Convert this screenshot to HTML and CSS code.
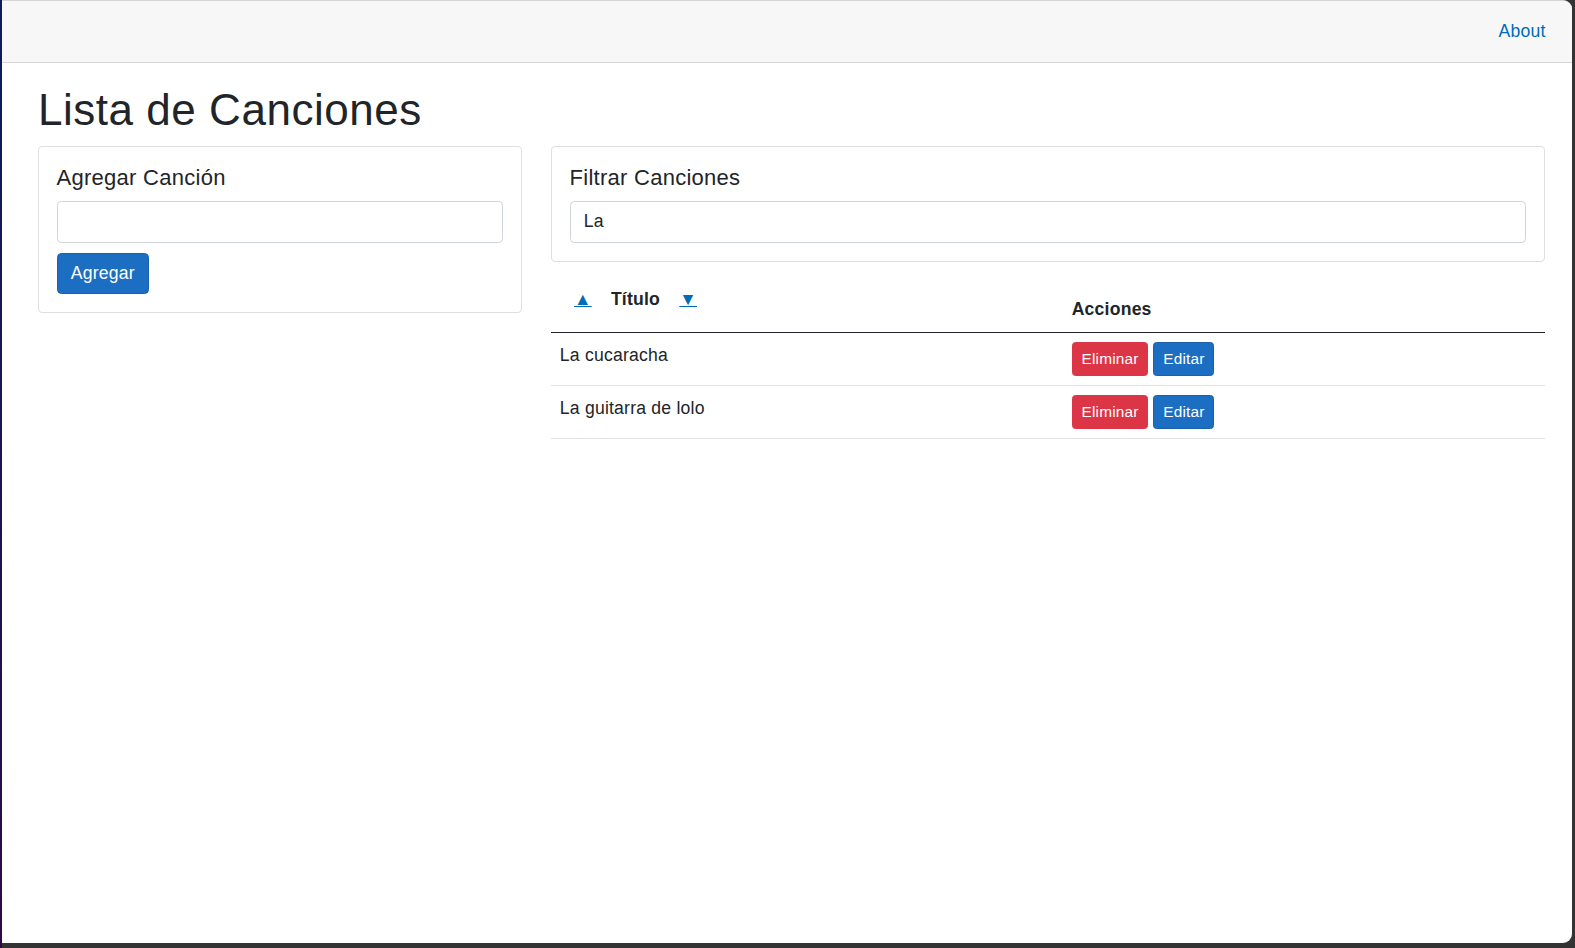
FILE: index.html
```html
<!DOCTYPE html>
<html lang="es">
<head>
<meta charset="utf-8">
<title>Lista de Canciones</title>
<link rel="stylesheet" href="styles.css">
</head>
<body>
<div class="edge"></div>
<div class="window">
  <header class="top-row">
    <a href="#" class="about">About</a>
  </header>
  <main class="content">
    <h1>Lista de Canciones</h1>
    <div class="row">
      <div class="col-left">
        <div class="card">
          <h5 class="card-title">Agregar Canción</h5>
          <input class="form-control mb" type="text" value="">
          <button class="btn btn-primary">Agregar</button>
        </div>
      </div>
      <div class="col-right">
        <div class="card">
          <h5 class="card-title">Filtrar Canciones</h5>
          <input class="form-control" type="text" value="La">
        </div>
        <table class="table">
          <thead>
            <tr>
              <th class="col-title"><button class="btn btn-link sort">▲</button> Título <button class="btn btn-link sort">▼</button></th>
              <th class="col-actions">Acciones</th>
            </tr>
          </thead>
          <tbody>
            <tr>
              <td>La cucaracha</td>
              <td><button class="btn btn-sm btn-danger">Eliminar</button> <button class="btn btn-sm btn-primary">Editar</button></td>
            </tr>
            <tr>
              <td>La guitarra de lolo</td>
              <td><button class="btn btn-sm btn-danger">Eliminar</button> <button class="btn btn-sm btn-primary">Editar</button></td>
            </tr>
          </tbody>
        </table>
      </div>
    </div>
  </main>
</div>
</body>
</html>
```

FILE: styles.css
```css
* {
  box-sizing: border-box;
  letter-spacing: 0.012em;
}

html, body {
  margin: 0;
  height: 948px;
  overflow: hidden;
}

body {
  background: #333333;
  display: flex;
  font-family: "Liberation Sans", Arial, Helvetica, sans-serif;
  font-size: 17.6px;
  line-height: 1.5;
  color: #212529;
}

.edge {
  width: 2px;
  flex: none;
  background: linear-gradient(#0b1d5a, #1a1450 50%, #2c0b40);
}

.window {
  flex: 1;
  margin: 0 3px 5px 0;
  background: #ffffff;
  border-top: 1px solid #d4d4d4;
  border-radius: 0 9px 9px 0;
  overflow: hidden;
  display: flex;
  flex-direction: column;
}

.top-row {
  height: 61.6px;
  flex: none;
  background: #f7f7f7;
  border-bottom: 1px solid #d6d5d5;
  display: flex;
  align-items: center;
  justify-content: flex-end;
  padding: 0 26.4px 0 35.2px;
}

.about {
  color: #006bb7;
  text-decoration: none;
  white-space: nowrap;
}

.content {
  padding: 21.4px 27px 0 36px;
}

h1 {
  margin: 0 0 9.2px;
  font-size: 44px;
  font-weight: 500;
  line-height: 1.2;
}

.row {
  display: grid;
  grid-template-columns: 484px 1fr;
  column-gap: 29px;
  align-items: start;
}

.card {
  border: 1px solid rgba(0, 0, 0, 0.125);
  border-radius: 4.4px;
  padding: 17.6px 17.6px 18.2px;
  background: #fff;
}

.card-title {
  margin: 0 0 10px;
  font-size: 22px;
  font-weight: 500;
  line-height: 1.2;
}

.form-control {
  display: block;
  width: 100%;
  height: 41.6px;
  padding: 6.6px 13.2px;
  font: inherit;
  font-size: 17.6px;
  line-height: 1.5;
  color: #212529;
  background: #fff;
  border: 1px solid #ced4da;
  border-radius: 4.4px;
  outline: none;
}

.mb { margin-bottom: 10px; }

.btn {
  display: inline-block;
  font-family: inherit;
  font-size: 17.6px;
  font-weight: 400;
  line-height: 1.5;
  padding: 6.6px 13.2px;
  border: 1px solid transparent;
  border-radius: 4.4px;
  background: transparent;
  color: #212529;
  vertical-align: baseline;
  cursor: pointer;
}

.btn-primary {
  color: #fff;
  background: #1b6ec2;
  border-color: #1861ac;
}

.btn-danger {
  color: #fff;
  background: #dc3545;
  border-color: #dc3545;
}

.btn-link {
  color: #006bb7;
  text-decoration: underline;
}

.sort {
  padding-bottom: 9.6px;
}

.btn-sm {
  font-size: 15.4px;
  padding: 4.7px 8.8px;
  border-radius: 3.5px;
}

.table {
  width: 100%;
  margin-top: 7.8px;
  border-collapse: collapse;
  vertical-align: top;
}

.table tbody,
.table tbody tr,
.table tbody td {
  vertical-align: inherit;
}

.table th,
.table td {
  padding: 8.8px;
  text-align: left;
  border-bottom: 1px solid #dee2e6;
}

.table thead,
.table thead tr,
.table thead th {
  vertical-align: bottom;
}

.table thead th {
  font-weight: 700;
  border-bottom-color: #212529;
}

.table thead th.col-actions {
  padding-bottom: 9.8px;
}

.col-title {
  width: 51.5%;
}
```
